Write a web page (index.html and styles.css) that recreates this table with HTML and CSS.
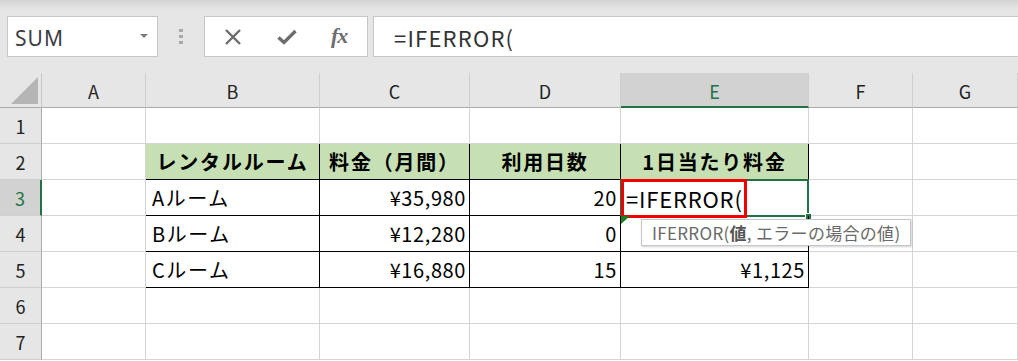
FILE: index.html
```html
<!DOCTYPE html>
<html lang="ja">
<head>
<meta charset="utf-8">
<title>IFERROR</title>
<link rel="stylesheet" href="styles.css">
</head>
<body>
<div class="app">
  <div class="toolbar">
    <div class="namebox">
      <span class="name">SUM</span>
      <span class="caret"></span>
    </div>
    <div class="grip"><i></i><i></i><i></i></div>
    <div class="fxbtns">
      <svg class="ico" width="18" height="16" viewBox="0 0 18 16"><path d="M2 1 L16 15 M16 1 L2 15" stroke="#6d6d6d" stroke-width="2.4" fill="none"/></svg>
      <svg class="ico" width="20" height="16" viewBox="0 0 20 16"><path d="M1.5 8.5 L7 13.5 L18.5 2" stroke="#6d6d6d" stroke-width="3.4" fill="none"/></svg>
      <span class="fx">fx</span>
    </div>
    <div class="formula">=IFERROR(</div>
  </div>

  <div class="sheet">
    <!-- data block B2:E5 -->
    <div class="table">
      <div class="cell th">レンタルルーム</div>
      <div class="cell th">料金（月間）</div>
      <div class="cell th">利用日数</div>
      <div class="cell th">1日当たり料金</div>

      <div class="cell">Aルーム</div>
      <div class="cell num">¥35,980</div>
      <div class="cell num">20</div>
      <div class="cell edit">
        <span class="entry">=IFERROR(</span>
        <span class="active"><span class="handle"></span></span>
        <span class="mark"></span>
      </div>

      <div class="cell">Bルーム</div>
      <div class="cell num">¥12,280</div>
      <div class="cell num">0</div>
      <div class="cell tipcell">
        <span class="flag"></span>
        <div class="tip">IFERROR(<b>値</b>, エラーの場合の値)</div>
      </div>

      <div class="cell">Cルーム</div>
      <div class="cell num">¥16,880</div>
      <div class="cell num">15</div>
      <div class="cell num">¥1,125</div>
    </div>

    <!-- column headings -->
    <div class="corner"><span class="corner-tri"></span></div>
    <div class="colhead">A</div>
    <div class="colhead">B</div>
    <div class="colhead">C</div>
    <div class="colhead">D</div>
    <div class="colhead sel">E</div>
    <div class="colhead">F</div>
    <div class="colhead">G</div>

    <!-- row 1 -->
    <div class="rowhead">1</div>
    <div class="gc"></div><div class="gc"></div><div class="gc"></div><div class="gc"></div><div class="gc"></div><div class="gc"></div><div class="gc"></div>

    <!-- rows 2-5 (B:E come from the data block) -->
    <div class="rowhead">2</div>
    <div class="gc"></div><div class="gc"></div><div class="gc"></div>
    <div class="rowhead sel">3</div>
    <div class="gc"></div><div class="gc"></div><div class="gc"></div>
    <div class="rowhead">4</div>
    <div class="gc"></div><div class="gc"></div><div class="gc"></div>
    <div class="rowhead">5</div>
    <div class="gc"></div><div class="gc"></div><div class="gc"></div>

    <!-- row 6 -->
    <div class="rowhead">6</div>
    <div class="gc"></div><div class="gc"></div><div class="gc"></div><div class="gc"></div><div class="gc"></div><div class="gc"></div><div class="gc"></div>

    <!-- row 7 -->
    <div class="rowhead">7</div>
    <div class="gc"></div><div class="gc"></div><div class="gc"></div><div class="gc"></div><div class="gc"></div><div class="gc"></div><div class="gc"></div>
  </div>
</div>
</body>
</html>
```

FILE: styles.css
```css
* { box-sizing: border-box; }

html, body {
  margin: 0;
  padding: 0;
  background: #ffffff;
  overflow: hidden;
}

.app {
  width: 1018px;
  height: 361px;
  font-family: "Noto Sans CJK JP", "Noto Sans", sans-serif;
  color: #000;
}

/* ---------- formula bar ---------- */
.toolbar {
  height: 73px;
  display: flex;
  align-items: flex-start;
  padding: 16px 0 0 7px;
  background: linear-gradient(#d3d3d3 0px, #e4e4e4 8px, #e6e6e6 12px);
}

.namebox {
  width: 151px;
  height: 41px;
  background: #fff;
  border: 1px solid #c6c6c6;
  display: flex;
  align-items: center;
  justify-content: space-between;
  padding: 0 9px 0 7px;
}

.name {
  font-family: "Noto Sans", sans-serif;
  font-size: 21px;
  letter-spacing: 1px;
  color: #3c3c44;
  padding-top: 2px;
}

.caret {
  width: 0;
  height: 0;
  border-left: 4px solid transparent;
  border-right: 4px solid transparent;
  border-top: 4px solid #7a7a7a;
  margin-top: -2px;
}

.grip {
  width: 46px;
  height: 41px;
  display: flex;
  flex-direction: column;
  align-items: center;
  justify-content: center;
  gap: 3px;
}

.grip i {
  display: block;
  width: 4px;
  height: 3px;
  background: #a9a9a9;
}

.fxbtns {
  width: 164px;
  height: 41px;
  background: #fff;
  border: 1px solid #c6c6c6;
  display: flex;
  align-items: center;
  padding-left: 19px;
}

.fxbtns .ico:nth-child(1) { margin-right: 35px; }
.fxbtns .ico:nth-child(2) { margin-right: 34px; }

.fx {
  font-family: "Liberation Serif", serif;
  font-style: italic;
  font-weight: 700;
  font-size: 22px;
  color: #6d6d6d;
  letter-spacing: -1px;
  margin-top: -2px;
}

.formula {
  flex: 1;
  height: 41px;
  margin-left: 5px;
  background: #fff;
  border: 1px solid #c6c6c6;
  border-right: none;
  display: flex;
  align-items: center;
  padding-left: 20px;
  font-size: 22px;
  letter-spacing: 1.2px;
  color: #333;
}

/* ---------- worksheet grid ---------- */
.sheet {
  display: grid;
  grid-template-columns: 42px 104px 174px 150px 151px 188px 104px 1fr;
  grid-template-rows: 35px repeat(7, 36px);
  background: #fff;
}

.corner {
  background: #e6e6e6;
  border-right: 1px solid #c8c8c8;
  border-bottom: 1px solid #ababab;
  display: flex;
  align-items: flex-end;
  justify-content: flex-end;
  padding: 0 3px 3px 0;
}

.corner-tri {
  width: 0;
  height: 0;
  border-bottom: 27px solid #b5b5b5;
  border-left: 27px solid transparent;
}

.colhead {
  background: #e6e6e6;
  border-right: 1px solid #cfcfcf;
  border-bottom: 1px solid #ababab;
  display: flex;
  align-items: center;
  justify-content: center;
  font-size: 18px;
  color: #222;
  padding-top: 2px;
}

.colhead.sel {
  background: #d2d2d2;
  color: #217346;
  border-bottom: 2px solid #217346;
  padding-top: 3px;
}

.rowhead {
  background: #e6e6e6;
  border-right: 1px solid #ababab;
  border-bottom: 1px solid #cfcfcf;
  display: flex;
  align-items: center;
  justify-content: center;
  font-size: 18px;
  color: #222;
}

.rowhead.sel {
  background: #d2d2d2;
  color: #217346;
  border-right: 2px solid #217346;
}

.gc {
  border-right: 1px solid #d4d4d4;
  border-bottom: 1px solid #d4d4d4;
}

/* ---------- bordered data block ---------- */
.table {
  grid-column: 3 / 7;
  grid-row: 3 / 7;
  margin: -1px 0 0 -1px;
  border-left: 1px solid #000;
  border-top: 1px solid #000;
  display: grid;
  grid-template-columns: 174px 150px 151px 188px;
  grid-template-rows: repeat(4, 36px);
}

.cell {
  position: relative;
  border-right: 1px solid #000;
  border-bottom: 1px solid #000;
  display: flex;
  align-items: center;
  padding: 0 3px 0 6px;
  font-size: 20px;
  letter-spacing: 1.6px;
  white-space: nowrap;
}

.cell.th {
  background: #c6e0b4;
  justify-content: center;
  font-weight: 700;
  font-size: 20px;
  padding: 0;
  letter-spacing: 1.8px;
}

.cell.num {
  justify-content: flex-end;
  letter-spacing: 0.6px;
  padding-right: 3px;
}

.cell.edit {
  padding-left: 5px;
}

.entry {
  font-size: 22px;
  letter-spacing: 0.8px;
}

.active {
  position: absolute;
  left: -1px;
  top: -1px;
  width: 189px;
  height: 38px;
  border: 2px solid #217346;
}

.handle {
  position: absolute;
  right: -4px;
  bottom: -4px;
  width: 6px;
  height: 6px;
  background: #217346;
  border-left: 1px solid #fff;
  border-top: 1px solid #fff;
}

.mark {
  position: absolute;
  left: 0;
  top: -1px;
  width: 126px;
  height: 39px;
  border: 3px solid #f00000;
}

.flag {
  position: absolute;
  left: 0;
  top: 0;
  width: 0;
  height: 0;
  border-top: 8px solid #1e7d23;
  border-right: 9px solid transparent;
}

.tip {
  position: absolute;
  left: 20px;
  top: 3px;
  width: 270px;
  height: 27px;
  z-index: 5;
  background: #fff;
  border: 1px solid #c6c6c6;
  box-shadow: 1px 1px 2px rgba(0, 0, 0, 0.18);
  display: flex;
  align-items: center;
  padding-left: 10px;
  font-size: 17px;
  letter-spacing: 0.3px;
  color: #6a6a6a;
}

.tip b {
  font-weight: 700;
  color: #555;
}
```
